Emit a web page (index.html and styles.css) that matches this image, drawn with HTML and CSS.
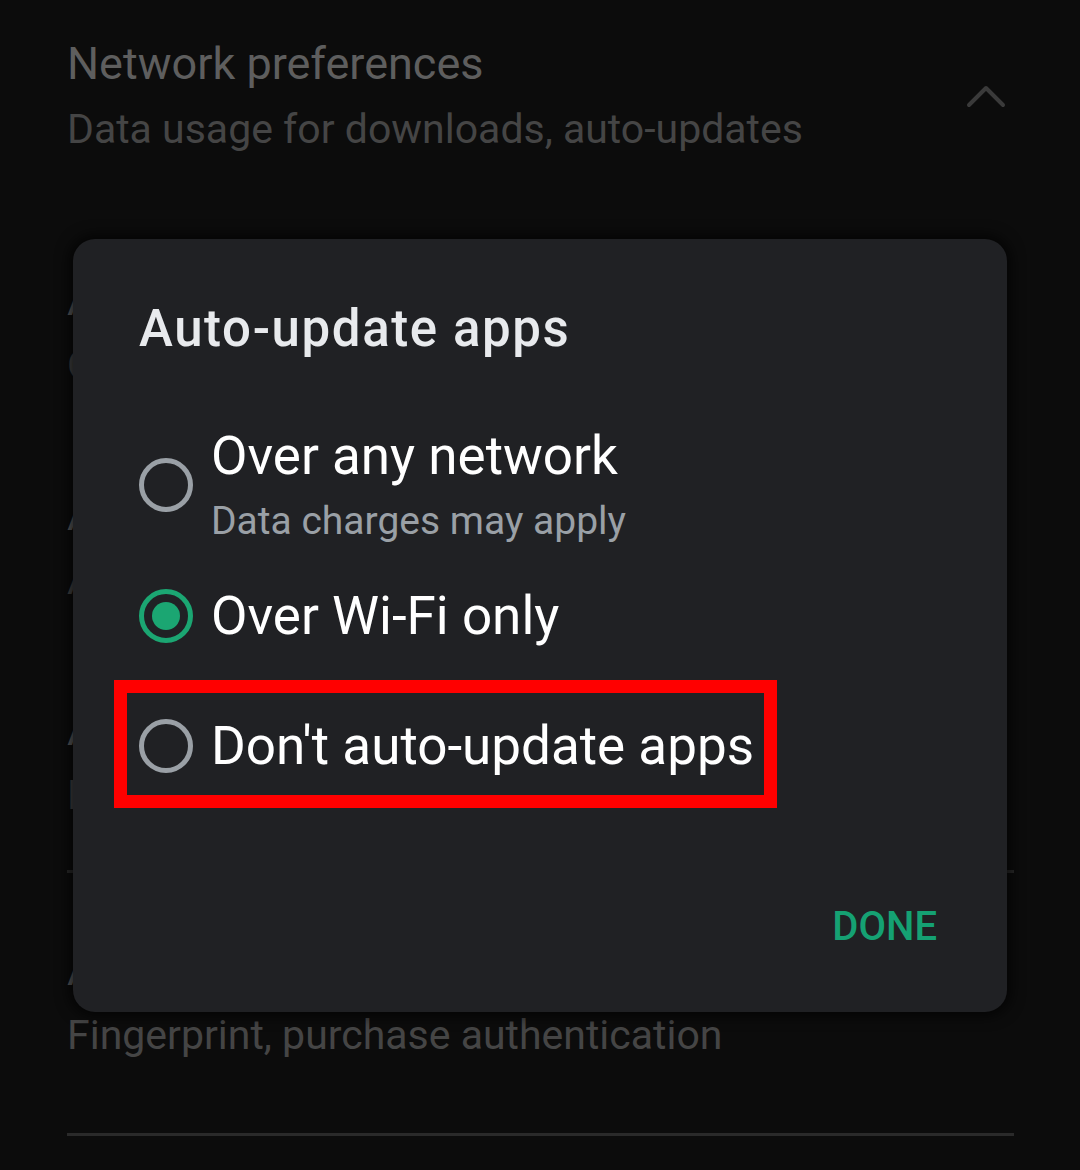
FILE: index.html
```html
<!DOCTYPE html>
<html>
<head>
<meta charset="utf-8">
<link rel="stylesheet" href="styles.css">
</head>
<body>
<div class="screen">
  <div class="settings">
    <div class="row row-first">
      <div class="row-text">
        <div class="row-title">Network preferences</div>
        <div class="row-sub">Data usage for downloads, auto-updates</div>
      </div>
      <svg class="chevron" width="40" height="24" viewBox="0 0 40 24"><polyline points="3,21 20,4 37,21" fill="none" stroke="#3a3a3a" stroke-width="4" stroke-linecap="round" stroke-linejoin="round"/></svg>
    </div>
    <div class="row">
      <div class="row-text">
        <div class="row-title">App download preference</div>
        <div class="row-sub">Over any network</div>
      </div>
    </div>
    <div class="row">
      <div class="row-text">
        <div class="row-title">Auto-update apps</div>
        <div class="row-sub">Auto-update apps over Wi-Fi only</div>
      </div>
    </div>
    <div class="row">
      <div class="row-text">
        <div class="row-title">Auto-play videos</div>
        <div class="row-sub">Don't auto-play videos</div>
      </div>
    </div>
    <div class="divider"></div>
    <div class="row row-auth">
      <div class="row-text">
        <div class="row-title">Authentication</div>
        <div class="row-sub">Fingerprint, purchase authentication</div>
      </div>
    </div>
    <div class="divider"></div>
  </div>

  <div class="dialog">
    <div class="dialog-title">Auto-update apps</div>
    <div class="options">
      <div class="option option-first">
        <span class="radio"></span>
        <div class="option-text">
          <div class="option-label">Over any network</div>
          <div class="option-sub">Data charges may apply</div>
        </div>
      </div>
      <div class="option option-second">
        <span class="radio radio-on"><span class="radio-dot"></span></span>
        <div class="option-text">
          <div class="option-label">Over Wi-Fi only</div>
        </div>
      </div>
      <div class="option option-third">
        <span class="radio"></span>
        <div class="option-text">
          <div class="option-label">Don't auto-update apps</div>
        </div>
      </div>
    </div>
    <div class="actions">
      <span class="done">DONE</span>
    </div>
    <div class="highlight"></div>
  </div>
</div>
</body>
</html>
```

FILE: styles.css
```css
html, body {
  margin: 0;
  padding: 0;
  background: #0c0c0c;
}
.screen {
  position: relative;
  width: 1080px;
  height: 1170px;
  overflow: hidden;
  font-family: Roboto, "Open Sans", sans-serif;
}
.settings {
  padding: 0 66px 0 67px;
  display: flex;
  flex-direction: column;
}
.row {
  display: flex;
  align-items: center;
  justify-content: space-between;
  height: 215px;
}
.row-first {
  height: 225px;
  align-items: flex-start;
  padding-top: 36px;
  box-sizing: border-box;
}
.row-first .chevron {
  margin-top: 48px;
  margin-right: 8px;
}
.row-title {
  font-size: 45px;
  line-height: 56px;
  color: #5e5e5e;
  white-space: nowrap;
}
.row-sub {
  font-size: 41px;
  line-height: 58px;
  margin-top: 8px;
  color: #454545;
  white-space: nowrap;
}
.divider {
  height: 3px;
  background: #2a2a2a;
}
.row-auth {
  height: 260px;
}
.dialog {
  position: absolute;
  left: 73px;
  top: 239px;
  width: 934px;
  height: 773px;
  box-sizing: border-box;
  background: #202124;
  border-radius: 22px;
  box-shadow: 0 0 14px 4px rgba(0,0,0,0.7);
  padding: 58px 70px 0 66px;
  display: flex;
  flex-direction: column;
}
.dialog-title {
  font-size: 51px;
  font-weight: 500;
  letter-spacing: 1.6px;
  line-height: 64px;
  color: #e8eaed;
}
.options {
  display: flex;
  flex-direction: column;
  margin-top: 61px;
}
.option {
  display: flex;
  align-items: center;
  gap: 18px;
}
.option-second {
  margin-top: 35px;
}
.option-third {
  margin-top: 62px;
}
.radio {
  width: 54px;
  height: 54px;
  box-sizing: border-box;
  border: 5px solid #9aa0a6;
  border-radius: 50%;
  flex: none;
  display: flex;
  align-items: center;
  justify-content: center;
}
.radio-on {
  border-color: #1ba672;
}
.radio-dot {
  width: 28px;
  height: 28px;
  border-radius: 50%;
  background: #1ba672;
}
.option-label {
  font-size: 53px;
  line-height: 68px;
  color: #ffffff;
  white-space: nowrap;
}
.option-sub {
  font-size: 39px;
  line-height: 52px;
  margin-top: 5px;
  color: #9aa0a6;
  white-space: nowrap;
}
.actions {
  display: flex;
  justify-content: flex-end;
  margin-top: 123px;
}
.done {
  font-size: 40px;
  font-weight: 500;
  color: #15a173;
}
.highlight {
  position: absolute;
  left: 41px;
  top: 441px;
  width: 663px;
  height: 128px;
  box-sizing: border-box;
  border: 13px solid #ff0000;
}
```
